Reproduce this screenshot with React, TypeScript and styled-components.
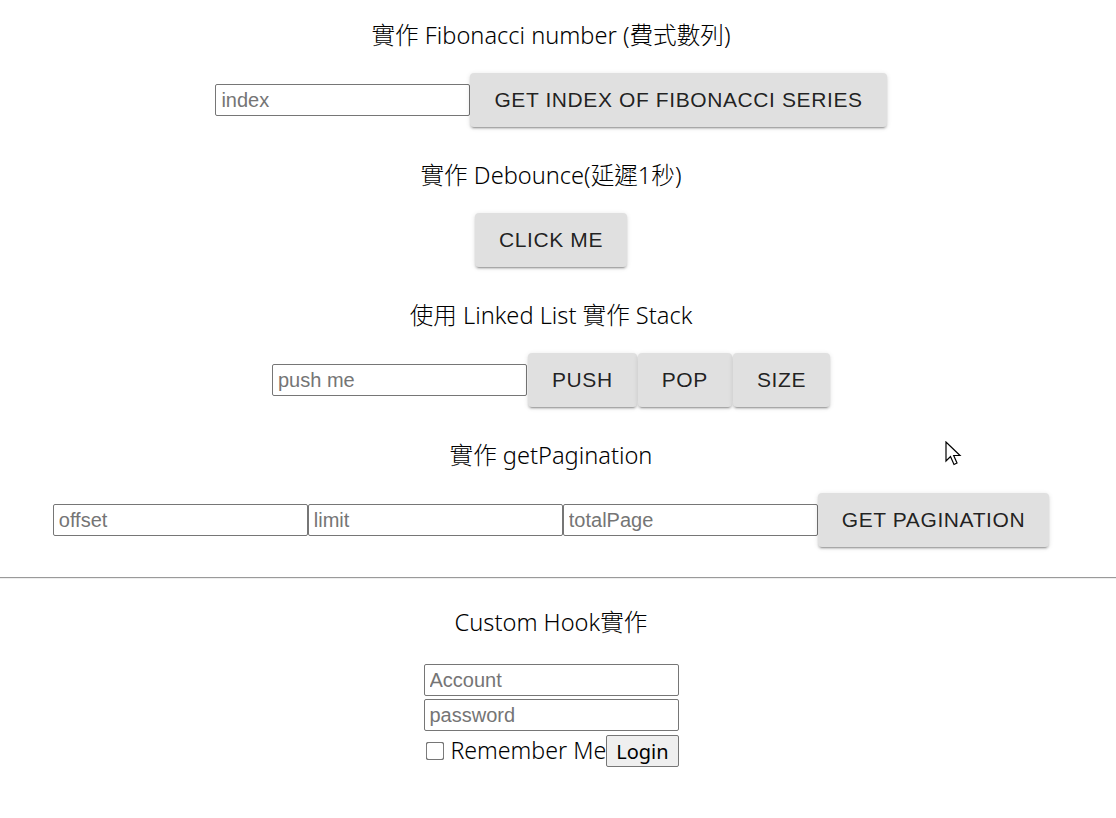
import React from "react";
import styled, { createGlobalStyle } from "styled-components";

const Global = createGlobalStyle`
  html, body { margin: 0; padding: 0; background: #fff; }
  body { font-family: "Noto Sans", "Noto Sans CJK TC", sans-serif; color: #000; }
`;

const Page = styled.div`
  position: relative;
  width: 1116px;
  min-height: 818px;
`;

const Content = styled.div`
  width: 1102px;
  display: flex;
  flex-direction: column;
`;

const Section = styled.section`
  display: flex;
  flex-direction: column;
  align-items: center;
  padding: 20px 0 13px;
  gap: 23px;
`;

const Title = styled.div`
  height: 30px;
  line-height: 30px;
  font-size: 23.6px;
  font-weight: 300;
  font-family: "Noto Sans", "Noto Sans CJK TC", sans-serif;
  white-space: nowrap;
`;

const Row = styled.div<{ $gap?: number }>`
  display: flex;
  align-items: center;
  height: 54px;
  gap: ${(p) => p.$gap ?? 0}px;
`;

const TextInput = styled.input`
  box-sizing: border-box;
  width: 255px;
  height: 32px;
  margin: 0;
  padding: 1px 5px;
  border: 1px solid #767676;
  border-radius: 2px;
  font-family: "Liberation Sans", Arial, sans-serif;
  font-size: 20px;
  color: #000;
  background: #fff;
  &::placeholder { color: #757575; }
`;

const MuiButton = styled.button`
  box-sizing: border-box;
  height: 54px;
  padding: 0 24px;
  border: none;
  border-radius: 4px;
  background: #e0e0e0;
  color: rgba(0, 0, 0, 0.87);
  font-family: "Liberation Sans", Arial, sans-serif;
  font-size: 21px;
  letter-spacing: 0.02857em;
  text-transform: uppercase;
  cursor: pointer;
  box-shadow: 0px 3px 1px -2px rgba(0,0,0,0.2), 0px 2px 2px 0px rgba(0,0,0,0.14), 0px 1px 5px 0px rgba(0,0,0,0.12);
`;

const Divider = styled.hr`
  margin: 17px 0 0;
  border: none;
  border-top: 1px solid #9a9a9a;
  border-bottom: 1px solid #eeeeee;
  height: 0;
  width: 1116px;
`;

const LoginSection = styled.section`
  display: flex;
  flex-direction: column;
  align-items: center;
  padding-top: 28px;
`;

const Form = styled.form`
  display: flex;
  flex-direction: column;
  align-items: center;
  margin-top: 27px;
  gap: 3px;
`;

const CheckRow = styled.div`
  display: flex;
  align-items: center;
  height: 32px;
  margin-top: 1px;
`;

const Check = styled.input`
  width: 16px;
  height: 16px;
  margin: 0 7px 0 4px;
  transform: scale(1.15);
  accent-color: #767676;
`;

const CheckLabel = styled.label`
  font-size: 23.2px;
  font-weight: 300;
  font-family: "Noto Sans", sans-serif;
  line-height: 32px;
  margin-top: -3px;
`;

const NativeButton = styled.button`
  box-sizing: border-box;
  height: 32px;
  padding: 0 9px;
  border: 1px solid #767676;
  border-radius: 2px;
  background: #efefef;
  font-family: "Noto Sans", sans-serif;
  font-size: 20px;
  color: #000;
`;

const Cursor = styled.svg`
  position: absolute;
  left: 945px;
  top: 441px;
  pointer-events: none;
`;

export default function App() {
  return (
    <Page>
      <Global />
      <Content>
        <Section>
          <Title>實作 Fibonacci number (費式數列)</Title>
          <Row>
            <TextInput placeholder="index" />
            <MuiButton>Get index of Fibonacci series</MuiButton>
          </Row>
        </Section>
        <Section>
          <Title>實作 Debounce(延遲1秒)</Title>
          <Row>
            <MuiButton>Click me</MuiButton>
          </Row>
        </Section>
        <Section>
          <Title>使用 Linked List 實作 Stack</Title>
          <Row $gap={1}>
            <TextInput placeholder="push me" />
            <MuiButton>Push</MuiButton>
            <MuiButton>Pop</MuiButton>
            <MuiButton>Size</MuiButton>
          </Row>
        </Section>
        <Section>
          <Title>實作 getPagination</Title>
          <Row>
            <TextInput placeholder="offset" />
            <TextInput placeholder="limit" />
            <TextInput placeholder="totalPage" />
            <MuiButton>Get pagination</MuiButton>
          </Row>
        </Section>
      </Content>
      <Divider />
      <Content>
        <LoginSection>
          <Title>Custom Hook實作</Title>
          <Form onSubmit={(e) => e.preventDefault()}>
            <TextInput placeholder="Account" />
            <TextInput placeholder="password" type="password" />
            <CheckRow>
              <Check type="checkbox" id="rm" />
              <CheckLabel htmlFor="rm">Remember Me</CheckLabel>
              <NativeButton type="button">Login</NativeButton>
            </CheckRow>
          </Form>
        </LoginSection>
      </Content>
      <Cursor width="20" height="28" viewBox="0 0 20 28">
        <path d="M1 1 L1 20 L5.5 15.5 L9 23.5 L12 22 L8.7 14.5 L15 14.5 Z" fill="#fff" stroke="#000" strokeWidth="1.2" strokeLinejoin="miter" />
      </Cursor>
    </Page>
  );
}
